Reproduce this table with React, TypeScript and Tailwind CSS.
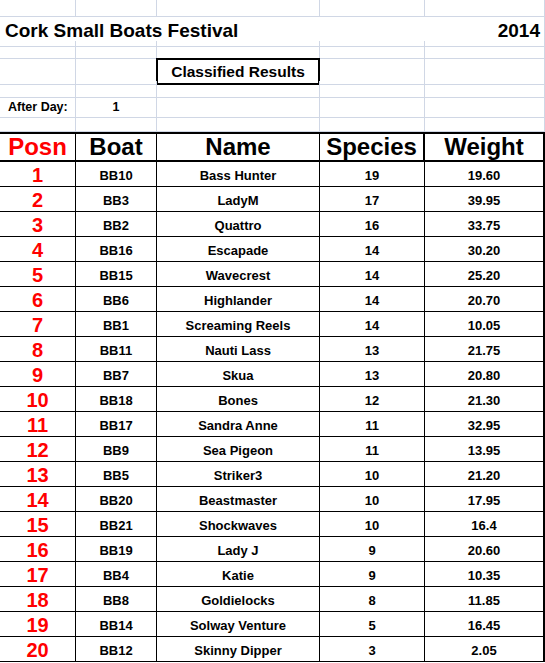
import React from "react";

type Result = {
  posn: number;
  boat: string;
  name: string;
  species: number;
  weight: string;
};

const results: Result[] = [
  { posn: 1, boat: "BB10", name: "Bass Hunter", species: 19, weight: "19.60" },
  { posn: 2, boat: "BB3", name: "LadyM", species: 17, weight: "39.95" },
  { posn: 3, boat: "BB2", name: "Quattro", species: 16, weight: "33.75" },
  { posn: 4, boat: "BB16", name: "Escapade", species: 14, weight: "30.20" },
  { posn: 5, boat: "BB15", name: "Wavecrest", species: 14, weight: "25.20" },
  { posn: 6, boat: "BB6", name: "Highlander", species: 14, weight: "20.70" },
  { posn: 7, boat: "BB1", name: "Screaming Reels", species: 14, weight: "10.05" },
  { posn: 8, boat: "BB11", name: "Nauti Lass", species: 13, weight: "21.75" },
  { posn: 9, boat: "BB7", name: "Skua", species: 13, weight: "20.80" },
  { posn: 10, boat: "BB18", name: "Bones", species: 12, weight: "21.30" },
  { posn: 11, boat: "BB17", name: "Sandra Anne", species: 11, weight: "32.95" },
  { posn: 12, boat: "BB9", name: "Sea Pigeon", species: 11, weight: "13.95" },
  { posn: 13, boat: "BB5", name: "Striker3", species: 10, weight: "21.20" },
  { posn: 14, boat: "BB20", name: "Beastmaster", species: 10, weight: "17.95" },
  { posn: 15, boat: "BB21", name: "Shockwaves", species: 10, weight: "16.4" },
  { posn: 16, boat: "BB19", name: "Lady J", species: 9, weight: "20.60" },
  { posn: 17, boat: "BB4", name: "Katie", species: 9, weight: "10.35" },
  { posn: 18, boat: "BB8", name: "Goldielocks", species: 8, weight: "11.85" },
  { posn: 19, boat: "BB14", name: "Solway Venture", species: 5, weight: "16.45" },
  { posn: 20, boat: "BB12", name: "Skinny Dipper", species: 3, weight: "2.05" },
];

const cols = "grid grid-cols-[76px_81px_163px_105px_120px]";
const grid = "border-r border-b border-[#d0d7e5]";

// plain empty spreadsheet row with gridlines
function BlankRow({ h }: { h: string }) {
  return (
    <div className={`${cols} ${h}`}>
      <div className={grid} />
      <div className={grid} />
      <div className={grid} />
      <div className={grid} />
      <div className={grid} />
    </div>
  );
}

export default function App() {
  return (
    <div
      className="w-[545px] h-[663px] overflow-hidden bg-white text-black font-bold"
      style={{ fontFamily: '"Liberation Sans", Arial, sans-serif' }}
    >
      {/* sheet header area */}
      <BlankRow h="h-[17px]" />
      <div className={`${cols} h-[24px]`}>
        <div className="col-span-4 border-b border-[#d0d7e5] flex items-center pl-[5px] text-[19px] whitespace-nowrap">
          Cork Small Boats Festival
        </div>
        <div className={`${grid} flex items-center justify-end pr-[4px] text-[19px]`}>
          2014
        </div>
      </div>
      <BlankRow h="h-[18px]" />
      <div className={`${cols} h-[22px]`}>
        <div className={grid} />
        <div className="border-b border-[#d0d7e5]" />
        <div className="-mt-px -ml-px border-2 border-black flex items-center justify-center text-[15.5px] whitespace-nowrap">
          Classified Results
        </div>
        <div className={grid} />
        <div className={grid} />
      </div>
      <BlankRow h="h-[17px]" />
      <div className={`${cols} h-[18px] text-[12.5px]`}>
        <div className={`${grid} flex items-center pl-[8px] whitespace-nowrap`}>
          After Day:
        </div>
        <div className={`${grid} flex items-center justify-center`}>1</div>
        <div className={grid} />
        <div className={grid} />
        <div className={grid} />
      </div>
      <BlankRow h="h-[16px]" />

      {/* results table */}
      <div className={`${cols} h-[30px] border-y-2 border-black text-[24px] leading-none`}>
        <div className="border-r border-black flex items-center justify-center text-[#ff0000]">
          Posn
        </div>
        <div className="border-r border-black flex items-center justify-center">Boat</div>
        <div className="border-r border-black flex items-center justify-center">Name</div>
        <div className="border-r-2 border-black flex items-center justify-center">Species</div>
        <div className="border-r-2 border-black flex items-center justify-center">Weight</div>
      </div>

      {results.map((r) => (
        <div key={r.posn} className={`${cols} h-[25px] border-b border-black text-[13px]`}>
          <div className="border-r border-black flex items-center justify-center pt-px text-[20px] leading-none text-[#ff0000]">
            {r.posn}
          </div>
          <div className="border-r border-black flex items-center justify-center pt-[4px]">{r.boat}</div>
          <div className="border-r border-black flex items-center justify-center pt-[4px]">{r.name}</div>
          <div className="border-r border-black flex items-center justify-center pt-[4px]">{r.species}</div>
          <div className="border-r-2 border-black flex items-center justify-center pt-[4px]">{r.weight}</div>
        </div>
      ))}
    </div>
  );
}
